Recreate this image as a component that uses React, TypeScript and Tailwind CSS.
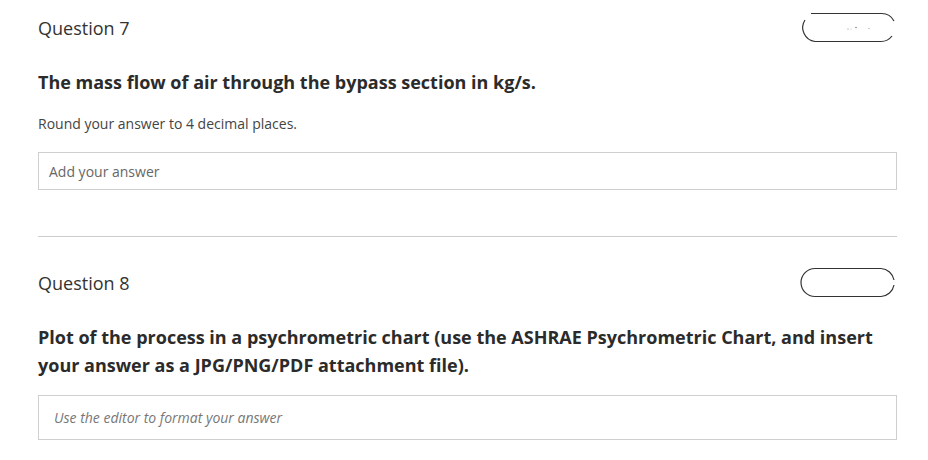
import React from "react";

function Pill1() {
  return (
    <svg width="96" height="32" viewBox="0 0 96 32" fill="none" className="shrink-0">
      <path d="M11 1.5 H81 A14 14 0 0 1 94 9" stroke="#333" strokeWidth="1.2" />
      <path d="M5 8 A14 14 0 0 0 15 29.5 H81 A14 14 0 0 0 92 24" stroke="#333" strokeWidth="1.2" />
      <circle cx="48" cy="17" r="0.6" fill="#888" />
      <circle cx="51" cy="17" r="0.5" fill="#aaa" />
      <circle cx="56" cy="15.5" r="0.7" fill="#666" />
      <circle cx="69" cy="16.5" r="0.6" fill="#888" />
    </svg>
  );
}

function Pill2() {
  return (
    <svg width="96" height="32" viewBox="0 0 96 32" fill="none" className="shrink-0">
      <path d="M15 1.5 H81 A14 14 0 0 1 94 13" stroke="#333" strokeWidth="1.2" />
      <path d="M94 18 A14 14 0 0 1 81 29.5 H15 A14 14 0 0 1 15 1.5" stroke="#333" strokeWidth="1.2" />
    </svg>
  );
}

export default function App() {
  return (
    <div
      className="w-[928px] h-[460px] bg-white overflow-hidden"
      style={{ fontFamily: "'Open Sans', 'Noto Sans', sans-serif" }}
    >
      <div className="ml-[38px] w-[859px] pt-[12px]">
        <div className="flex items-center justify-between h-[32px]">
          <div className="text-[18px] leading-[24px] text-[#333]">Question 7</div>
          <div className="mr-[1px]"><Pill1 /></div>
        </div>
        <div className="mt-[24px] text-[18px] leading-[28px] font-bold text-[#2b2b2b]">
          The mass flow of air through the bypass section in kg/s.
        </div>
        <div className="mt-[18px] text-[14px] leading-[20px] text-[#444]">
          Round your answer to 4 decimal places.
        </div>
        <div className="mt-[18px] h-[38px] border border-[#cfcfcf] flex items-center pl-[10px] text-[14px] text-[#666]">
          Add your answer
        </div>
        <div className="mt-[46px] h-px bg-[#cccccc]" />
        <div className="mt-[30px] flex items-center justify-between h-[32px]">
          <div className="text-[18px] leading-[24px] text-[#333]">Question 8</div>
          <div className="mr-[1px]"><Pill2 /></div>
        </div>
        <div className="mt-[24px] text-[18px] leading-[28px] font-bold text-[#2b2b2b]">
          Plot of the process in a psychrometric chart (use the ASHRAE Psychrometric Chart, and insert
          <br />
          your answer as a JPG/PNG/PDF attachment file).
        </div>
        <div className="mt-[16px] h-[45px] border border-[#cfcfcf] flex items-center pl-[15px] text-[14px] italic text-[#777]">
          Use the editor to format your answer
        </div>
      </div>
    </div>
  );
}
